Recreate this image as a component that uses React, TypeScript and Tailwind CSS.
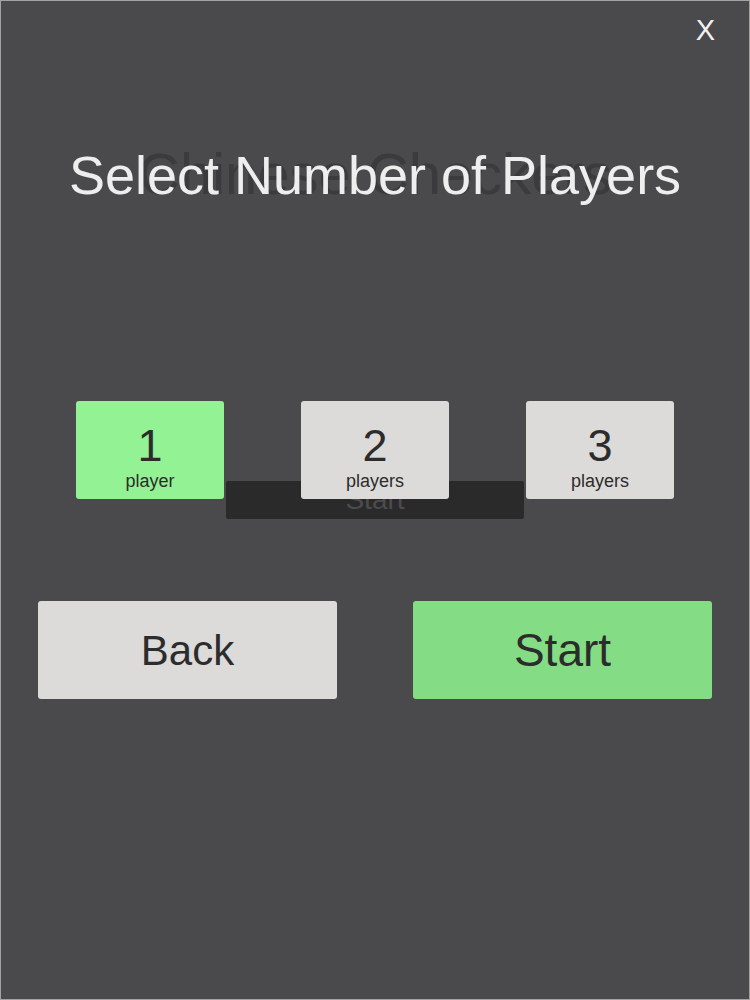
import { useState } from 'react'

const font = { fontFamily: '"Liberation Sans", Arial, sans-serif' }

interface PlayerOptionProps {
  count: number
  selected: boolean
  onSelect: () => void
}

function PlayerOption({ count, selected, onSelect }: PlayerOptionProps) {
  return (
    <button
      onClick={onSelect}
      className={`flex h-[98px] w-[148px] flex-col items-center rounded-[3px] pt-[22px] text-[#2c2c2c] ${
        selected ? 'bg-[#93f293]' : 'bg-[#dcdbd9]'
      }`}
    >
      <span className="text-[45px] leading-none">{count}</span>
      <span className="mt-[4px] text-[18px] leading-none">{count === 1 ? 'player' : 'players'}</span>
    </button>
  )
}

export default function App() {
  const [players, setPlayers] = useState(1)

  return (
    <div
      style={font}
      className="flex h-[1000px] w-[750px] flex-col border border-[#a3a3a3] bg-[#4a494b]"
    >
      <div className="flex justify-end pr-[34px] pt-[15px]">
        <button className="text-[29px] leading-none text-[#f2f2f2]">X</button>
      </div>

      {/* title over the faded game name */}
      <div className="mt-[100px] grid justify-items-center">
        <div className="col-start-1 row-start-1 h-[58px] text-[58px] leading-none text-[#3b3a3c]">
          Chinese Checkers
        </div>
        <h1 className="col-start-1 row-start-1 mt-[3px] h-[54px] text-[54px] leading-none text-[#eeeeee]">
          Select Number of Players
        </h1>
      </div>

      <div className="mt-[198px] grid">
        <div className="col-start-1 row-start-1 flex h-[38px] w-[298px] items-center justify-center self-end justify-self-center rounded-[2px] bg-[#2b2a2b]">
          <span className="text-[28px] leading-none text-[#4c4b4d]">Start</span>
        </div>
        <div className="col-start-1 row-start-1 mb-[20px] flex justify-center gap-[77px]">
          {[1, 2, 3].map((n) => (
            <PlayerOption key={n} count={n} selected={players === n} onSelect={() => setPlayers(n)} />
          ))}
        </div>
      </div>

      <div className="mt-[82px] flex justify-center gap-[76px]">
        <button className="flex h-[98px] w-[299px] items-center justify-center rounded-[3px] bg-[#dcdbd9] pt-[2px] text-[42px] leading-none text-[#2c2c2c]">
          Back
        </button>
        <button className="flex h-[98px] w-[299px] items-center justify-center rounded-[3px] bg-[#84dc84] text-[46px] leading-none text-[#2c2c2c]">
          Start
        </button>
      </div>
    </div>
  )
}
